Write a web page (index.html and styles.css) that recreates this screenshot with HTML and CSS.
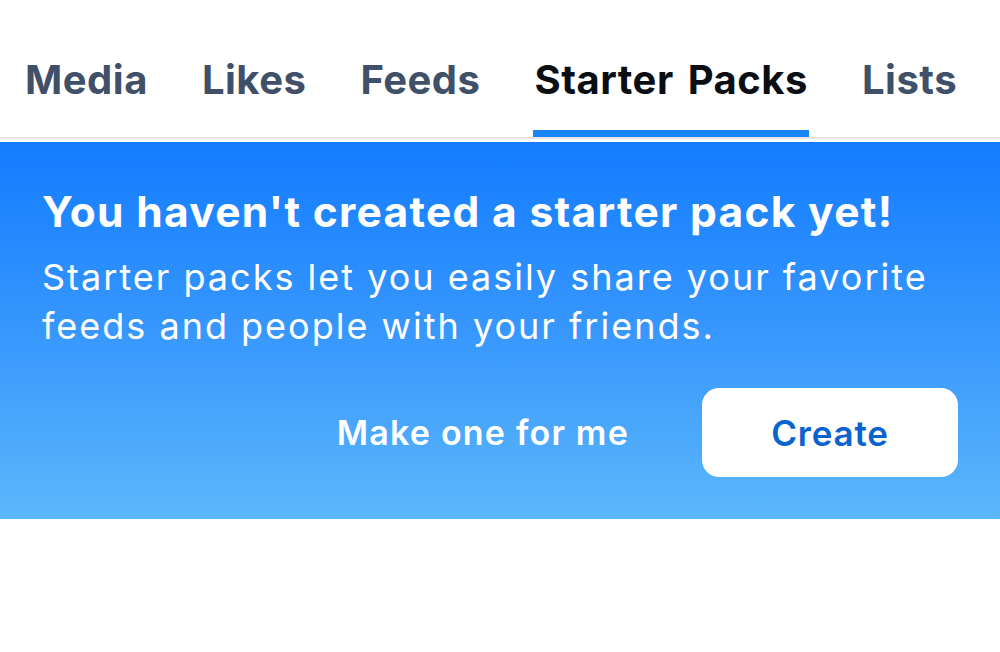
FILE: index.html
```html
<!DOCTYPE html>
<html>
<head>
<meta charset="utf-8">
<link rel="stylesheet" href="styles.css">
</head>
<body>
<div class="page">
  <nav class="tabs">
    <div class="tab">Media</div>
    <div class="tab">Likes</div>
    <div class="tab">Feeds</div>
    <div class="tab active">Starter Packs</div>
    <div class="tab">Lists</div>
  </nav>
  <section class="banner">
    <h1 class="title">You haven't created a starter pack yet!</h1>
    <p class="desc">Starter packs let you easily share your favorite feeds and people with your friends.</p>
    <div class="actions">
      <button class="btn-ghost">Make one for me</button>
      <button class="btn-create">Create</button>
    </div>
  </section>
</div>
</body>
</html>
```

FILE: styles.css
```css
* { box-sizing: border-box; }
html, body { margin: 0; padding: 0; background: #ffffff; }
body {
  font-family: "Inter", "Noto Sans", "Liberation Sans", sans-serif;
  width: 1000px;
  height: 652px;
  overflow: hidden;
}
.tabs {
  display: flex;
  gap: 54px;
  padding: 50px 0 0 25px;
  height: 139px;
  border-bottom: 2px solid #e9e6e2;
  white-space: nowrap;
}
.tab {
  font-size: 40px;
  font-weight: 700;
  color: #3f5068;
  line-height: 60px;
  height: 87px;
  letter-spacing: 0.5px;
  word-spacing: 4px;
  position: relative;
}
.tab.active { color: #0b0f14; }
.tab.active::after {
  content: "";
  position: absolute;
  left: -1px;
  right: -1px;
  bottom: 0;
  height: 7px;
  background: #1a84f5;
}
.banner {
  margin-top: 3px;
  height: 377px;
  background: linear-gradient(180deg, #137cff 0%, #3797fd 50%, #5cb7fa 100%);
  padding: 44px 42px 0 42px;
  color: #ffffff;
}
.title {
  margin: 0;
  font-size: 42.5px;
  font-weight: 700;
  line-height: 52px;
  letter-spacing: 1.3px;
  white-space: nowrap;
}
.desc {
  margin: 15px 0 0 0;
  font-size: 36px;
  font-weight: 400;
  line-height: 49px;
  letter-spacing: 2px;
  width: 930px;
}
.actions {
  display: flex;
  justify-content: flex-end;
  align-items: center;
  gap: 73px;
  margin-top: 37px;
}
.btn-ghost {
  font-family: inherit;
  background: none;
  border: none;
  color: #ffffff;
  font-size: 34px;
  font-weight: 600;
  padding: 0;
  letter-spacing: 1.2px;
}
.btn-create {
  font-family: inherit;
  width: 256px;
  height: 89px;
  background: #ffffff;
  border: none;
  border-radius: 17px;
  color: #0a63cf;
  font-size: 35px;
  font-weight: 600;
  letter-spacing: 0.8px;
}
```
